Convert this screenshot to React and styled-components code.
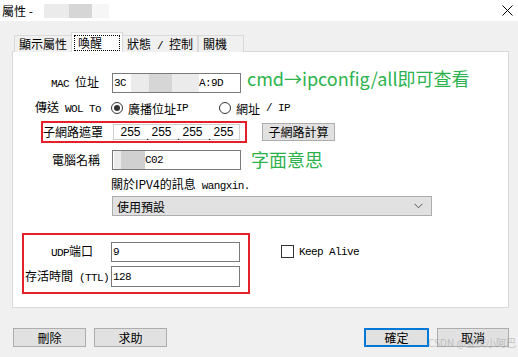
import React from "react";
import styled, { createGlobalStyle } from "styled-components";

const CJK = `"Noto Sans CJK TC", "Noto Sans CJK SC", sans-serif`;
const MONO = `"Liberation Mono", "Noto Sans CJK TC", monospace`;

const GlobalStyle = createGlobalStyle`
  html, body {
    margin: 0;
    padding: 0;
    background: #f0f0f0;
  }
  body {
    font-family: ${CJK};
    font-size: 12px;
    color: #000;
  }
`;

const Window = styled.div`
  width: 518px;
  height: 357px;
  background: #f0f0f0;
  position: relative;
  overflow: hidden;
`;

const TitleBar = styled.div`
  height: 21px;
  background: #fff;
  display: flex;
  align-items: center;
  justify-content: space-between;
  padding: 0 5px 0 2px;
  box-sizing: border-box;
`;

const Title = styled.div`
  display: flex;
  align-items: center;
  font-size: 12px;
  line-height: 14px;
`;

const Blur = styled.span`
  display: inline-block;
  width: ${(p) => p.$w}px;
  height: ${(p) => p.$h || 14}px;
  background: ${(p) => p.$c};
`;

const Body = styled.div`
  padding: 11px 9px 0 12px;
`;

const TabStrip = styled.div`
  display: flex;
  align-items: flex-end;
  height: 20px;
  margin-left: 2px;
  margin-bottom: -1px;
  position: relative;
  z-index: 1;
`;

const Tab = styled.div`
  box-sizing: border-box;
  width: ${(p) => p.$w}px;
  height: ${(p) => (p.$active ? 20 : 17)}px;
  border: 1px solid #d9d9d9;
  border-bottom: none;
  margin-left: ${(p) => (p.$active ? -1 : 0)}px;
  margin-right: ${(p) => (p.$active ? -1 : 0)}px;
  background: ${(p) => (p.$active ? "#fff" : "#f0f0f0")};
  padding: ${(p) => (p.$active ? "2px 2px 0" : "0 4px")};
  line-height: 16px;
  font-size: 12px;
  white-space: nowrap;
`;

const Focus = styled.span`
  display: block;
  border: 1px dotted #000;
  padding: 0 3px;
  line-height: 14px;
  height: 14px;
`;

const Panel = styled.div`
  box-sizing: border-box;
  width: 497px;
  height: 257px;
  background: #fff;
  border: 1px solid #d9d9d9;
  display: flex;
  flex-direction: column;
`;

const Row = styled.div`
  display: flex;
  align-items: ${(p) => p.$align || "center"};
  height: ${(p) => p.$h}px;
  margin-top: ${(p) => p.$mt}px;
  flex-shrink: 0;
`;

const Label = styled.span`
  display: flex;
  justify-content: ${(p) => (p.$left ? "flex-start" : "flex-end")};
  align-items: baseline;
  width: ${(p) => p.$w}px;
  padding-right: ${(p) => p.$pr || 0}px;
  margin-left: ${(p) => p.$ml || 0}px;
  box-sizing: border-box;
  flex-shrink: 0;
  white-space: nowrap;
  font-size: 12px;
  line-height: 14px;
`;

const Mono = styled.span`
  font-family: ${MONO};
  font-size: 11px;
  letter-spacing: -0.6px;
`;

const Input = styled.div`
  box-sizing: border-box;
  width: ${(p) => p.$w}px;
  height: ${(p) => p.$h}px;
  margin-left: ${(p) => p.$ml || 0}px;
  border: 1px solid ${(p) => p.$border || "#7a7a7a"};
  background: #fff;
  display: flex;
  align-items: center;
  padding-left: 1px;
  font-family: ${MONO};
  font-size: 11px;
  letter-spacing: -0.6px;
  flex-shrink: 0;
`;

const IpSeg = styled.span`
  width: 31px;
  text-align: center;
  font-family: "Liberation Sans", sans-serif;
  font-size: 12px;
  letter-spacing: 0;
  position: relative;
  &:not(:last-child)::after {
    content: ".";
    position: absolute;
    right: -3px;
    bottom: -3px;
    font-size: 11px;
  }
`;

const Note = styled.span`
  color: #2db34d;
  font-size: 18px;
  line-height: ${(p) => p.$lh}px;
  align-self: flex-start;
  margin-top: ${(p) => p.$mt}px;
  margin-left: ${(p) => p.$ml}px;
  white-space: nowrap;
  font-family: "Noto Sans CJK SC", "Noto Sans", sans-serif;
`;

const Radio = styled.span`
  box-sizing: border-box;
  width: 12px;
  height: 12px;
  border: 1px solid #333;
  border-radius: 50%;
  display: inline-flex;
  align-items: center;
  justify-content: center;
  margin-left: ${(p) => p.$ml}px;
  margin-right: 5px;
  flex-shrink: 0;
  &::after {
    content: "";
    width: 6px;
    height: 6px;
    border-radius: 50%;
    background: ${(p) => (p.$on ? "#333" : "transparent")};
  }
`;

const Highlight = styled.div`
  box-sizing: border-box;
  border: 2px solid #e5202a;
  width: ${(p) => p.$w}px;
  height: ${(p) => p.$h}px;
  margin-left: ${(p) => p.$ml}px;
  flex-shrink: 0;
  display: flex;
  flex-direction: ${(p) => p.$dir || "row"};
  align-items: ${(p) => (p.$dir === "column" ? "stretch" : "center")};
  padding-top: ${(p) => p.$pt || 0}px;
  gap: ${(p) => p.$gap || 0}px;
`;

const Button = styled.div`
  box-sizing: border-box;
  width: ${(p) => p.$w}px;
  height: ${(p) => p.$h || 19}px;
  margin-left: ${(p) => p.$ml || 0}px;
  background: #e1e1e1;
  border: ${(p) => (p.$default ? "2px solid #0078d7" : "1px solid #adadad")};
  display: flex;
  align-items: center;
  justify-content: center;
  font-size: 12px;
  line-height: 14px;
  flex-shrink: 0;
`;

const Select = styled.div`
  box-sizing: border-box;
  width: 320px;
  height: 20px;
  margin-left: 99px;
  background: #e1e1e1;
  border: 1px solid #adadad;
  display: flex;
  align-items: center;
  justify-content: space-between;
  padding: 0 8px 0 4px;
  font-size: 12px;
`;

const Checkbox = styled.span`
  box-sizing: border-box;
  width: 13px;
  height: 13px;
  border: 1px solid #333;
  background: #fff;
  margin-right: 5px;
  flex-shrink: 0;
`;

const CheckRow = styled.div`
  display: flex;
  align-items: center;
  margin-left: 31px;
  margin-top: 12px;
  height: 13px;
`;

const Footer = styled.div`
  display: flex;
  margin-top: 20px;
  padding-left: 1px;
`;

const Spacer = styled.div`
  flex: 1;
`;

const Watermark = styled.div`
  position: absolute;
  left: 428px;
  top: 337px;
  font-family: "Noto Sans CJK SC", sans-serif;
  font-size: 10px;
  line-height: 12px;
  color: rgba(150, 150, 150, 0.5);
  white-space: nowrap;
`;

export default function App() {
  return (
    <Window>
      <GlobalStyle />
      <TitleBar>
        <Title>
          屬性 -&nbsp;
          <Blur $w={8} $c="#fff" />
          <Blur $w={25} $c="#ebebeb" />
          <Blur $w={23} $c="#d6d6d6" />
          <Blur $w={17} $c="#f6f6f6" />
        </Title>
        <svg width="11" height="11" viewBox="0 0 11 11">
          <path d="M0.5 0.5 L10.5 10.5 M10.5 0.5 L0.5 10.5" stroke="#000" strokeWidth="1" />
        </svg>
      </TitleBar>
      <Body>
        <TabStrip>
          <Tab $w={58}>顯示屬性</Tab>
          <Tab $w={52} $active>
            <Focus>喚醒</Focus>
          </Tab>
          <Tab $w={76}>
            狀態<Mono>&nbsp;/&nbsp;</Mono>控制
          </Tab>
          <Tab $w={46}>關機</Tab>
        </TabStrip>
        <Panel>
          <Row $h={20} $mt={21}>
            <Label $w={86}>
              <Mono>MAC&nbsp;</Mono>位址
            </Label>
            <Input $w={129} $h={20} $ml={13}>
              3C
              <Blur $w={5} $c="#fff" />
              <Blur $w={18} $c="#ebebeb" $h={18} />
              <Blur $w={23} $c="#d6d6d6" $h={18} />
              <Blur $w={27} $c="#ebebeb" $h={18} />
              A:9D
            </Input>
            <Note $lh={20} $mt={-5} $ml={6}>
              cmd→ipconfig/all即可查看
            </Note>
          </Row>
          <Row $h={16} $mt={7}>
            <Label $w={88}>
              傳送<Mono>&nbsp;WOL To</Mono>
            </Label>
            <Radio $ml={10} $on />
            廣播位址<Mono>IP</Mono>
            <Radio $ml={31} />
            網址<Mono>&nbsp;/ IP</Mono>
          </Row>
          <Row $h={22} $mt={5}>
            <Highlight $w={206} $h={22} $ml={28}>
              <Label $w={70} $left>
                子網路遮罩
              </Label>
              <Input $w={127} $h={16} $border="#d0d0d0">
                <IpSeg>255</IpSeg>
                <IpSeg>255</IpSeg>
                <IpSeg>255</IpSeg>
                <IpSeg>255</IpSeg>
              </Input>
            </Highlight>
            <Button $w={73} $h={18} $ml={15}>
              子網路計算
            </Button>
          </Row>
          <Row $h={20} $mt={7}>
            <Label $w={87}>電腦名稱</Label>
            <Input $w={129} $h={20} $ml={12}>
              <Blur $w={7} $c="#ebebeb" $h={18} />
              <Blur $w={24} $c="#d0d0d0" $h={18} />
              C02
            </Input>
            <Note $lh={22} $mt={-2} $ml={10}>
              字面意思
            </Note>
          </Row>
          <Row $h={14} $mt={8}>
            <Label $w={200} $left $ml={98}>
              關於IPV4的訊息<Mono>&nbsp;wangxin.</Mono>
            </Label>
          </Row>
          <Row $h={20} $mt={4}>
            <Select>
              使用預設
              <svg width="9" height="6" viewBox="0 0 9 6">
                <path d="M0.5 0.8 L4.5 4.8 L8.5 0.8" fill="none" stroke="#555" strokeWidth="1" />
              </svg>
            </Select>
          </Row>
          <Row $h={61} $mt={17} $align="flex-start">
            <Highlight $w={228} $h={61} $ml={9} $dir="column" $pt={7} $gap={4}>
              <Row $h={20} $mt={0}>
                <Label $w={87} $pr={18}>
                  <Mono>UDP</Mono>端口
                </Label>
                <Input $w={129} $h={20}>
                  9
                </Input>
              </Row>
              <Row $h={21} $mt={0}>
                <Label $w={87} $pr={2}>
                  存活時間<Mono>&nbsp;(TTL)</Mono>
                </Label>
                <Input $w={129} $h={21}>
                  128
                </Input>
              </Row>
            </Highlight>
            <CheckRow>
              <Checkbox />
              <Mono>Keep Alive</Mono>
            </CheckRow>
          </Row>
        </Panel>
        <Footer>
          <Button $w={73}>刪除</Button>
          <Button $w={73} $ml={8}>
            求助
          </Button>
          <Spacer />
          <Button $w={65} $default>
            確定
          </Button>
          <Button $w={72} $ml={8}>
            取消
          </Button>
        </Footer>
      </Body>
      <Watermark>CSDN @亚庆小阿巴</Watermark>
    </Window>
  );
}
